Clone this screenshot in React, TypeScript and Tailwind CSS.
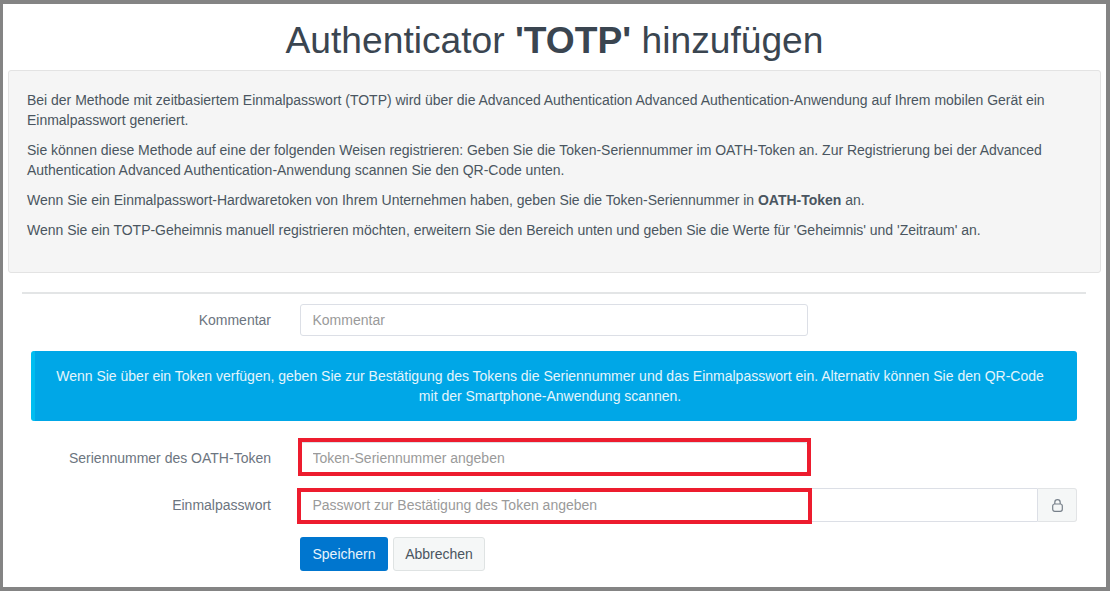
import React from "react";

const F = { fontFamily: '"Liberation Sans", Arial, sans-serif' };

function Row({ label, children, className }: { label: string; children: React.ReactNode; className?: string }) {
  return (
    <div className={"flex items-center " + (className ?? "")}>
      <label className="w-[264px] shrink-0 text-right text-[14px] text-[#6c7580]">{label}</label>
      <div className="ml-[29px] flex-1">{children}</div>
    </div>
  );
}

const inputCls =
  "block w-full rounded-[3px] border border-[#dcdfe6] bg-white pl-[11.5px] pr-3 text-[14px] text-[#555] outline-none placeholder:text-[#9a9a9a]";

export default function App() {
  return (
    <div style={F} className="relative h-[591px] w-[1110px] overflow-hidden border-t-4 border-r-4 border-b-4 border-l-[3px] border-[#848484] bg-white text-[#3f4a55]">
      <h1 className="h-[66px] pt-[13px] text-center text-[37.2px] leading-[46px] font-normal text-[#3a4550]">
        Authenticator <b>'TOTP'</b> hinzufügen
      </h1>
      <div className="mx-[5px] h-[203px] w-[1093px] rounded-[3px] border border-[#e3e3e3] bg-[#f5f5f5] pl-[18px] pr-[19px] pt-[19px] text-[14px] leading-[20px] tracking-[-0.015px] text-[#4a5560]">
        <p className="mb-[10px]">
          Bei der Methode mit zeitbasiertem Einmalpasswort (TOTP) wird über die Advanced Authentication Advanced Authentication-Anwendung auf Ihrem mobilen Gerät ein Einmalpasswort generiert.
        </p>
        <p className="mb-[10px]">
          Sie können diese Methode auf eine der folgenden Weisen registrieren: Geben Sie die Token-Seriennummer im OATH-Token an. Zur Registrierung bei der Advanced Authentication Advanced Authentication-Anwendung scannen Sie den QR-Code unten.
        </p>
        <p className="mb-[10px]">
          Wenn Sie ein Einmalpasswort-Hardwaretoken von Ihrem Unternehmen haben, geben Sie die Token-Seriennummer in <b>OATH-Token</b> an.
        </p>
        <p>
          Wenn Sie ein TOTP-Geheimnis manuell registrieren möchten, erweitern Sie den Bereich unten und geben Sie die Werte für 'Geheimnis' und 'Zeitraum' an.
        </p>
      </div>
      <div className="ml-[19px] mt-[19px] h-[2px] w-[1064px] bg-[#e3e5e6]" />
      <div className="ml-[4px] mt-[10px] w-[1065px]">
        <Row label="Kommentar" className="w-[801px]">
          <input className={inputCls + " h-[32px]"} placeholder="Kommentar" />
        </Row>
        <div className="ml-[24px] mt-[15px] h-[70px] w-[1046px] rounded-[3px] border-l-4 border-[#00bdf0] bg-[#00a7e7] pl-[15px] pr-[27px] pt-[15px] text-center text-[14px] leading-[20px] text-[#e4f5fc]">
          Wenn Sie über ein Token verfügen, geben Sie zur Bestätigung des Tokens die Seriennummer und das Einmalpasswort ein. Alternativ können Sie den QR-Code mit der Smartphone-Anwendung scannen.
        </div>
        <Row label="Seriennummer des OATH-Token" className="mt-[21px] w-[801px]">
          <input className={inputCls + " h-[32px]"} placeholder="Token-Seriennummer angeben" />
        </Row>
        <Row label="Einmalpasswort" className="mt-[14px] w-[1070px]">
          <div className="flex">
            <input className={inputCls + " h-[34px] flex-1 rounded-r-none"} placeholder="Passwort zur Bestätigung des Token angeben" />
            <span className="flex h-[34px] w-[39px] items-center justify-center rounded-r-[3px] border border-l-0 border-[#e2e4e6] bg-[#f5f7f7] text-[#77808a]">
              <svg width="11" height="13" viewBox="0 0 11 13" fill="none" stroke="currentColor" strokeWidth="1.2">
                <path d="M2.8 5V3.4a2.7 2.7 0 0 1 5.4 0V5" />
                <rect x="0.7" y="5" width="9.6" height="7.3" rx="2" />
              </svg>
            </span>
          </div>
        </Row>
        <div className="ml-[293px] mt-[15px] flex gap-[5px]">
          <button className="h-[34px] w-[88px] rounded-[3px] bg-[#0076cf] text-[14px] text-[#e8f3fb]">Speichern</button>
          <button className="h-[34px] w-[92px] rounded-[3px] border border-[#dfe3e3] bg-[#f5f7f7] text-[14px] text-[#4a5560]">Abbrechen</button>
        </div>
      </div>
      <div className="absolute left-[295px] top-[434px] h-[38px] w-[513px] border-4 border-[#ed1c2e]" />
      <div className="absolute left-[294px] top-[484px] h-[36px] w-[515px] border-4 border-[#ed1c2e]" />
    </div>
  );
}
